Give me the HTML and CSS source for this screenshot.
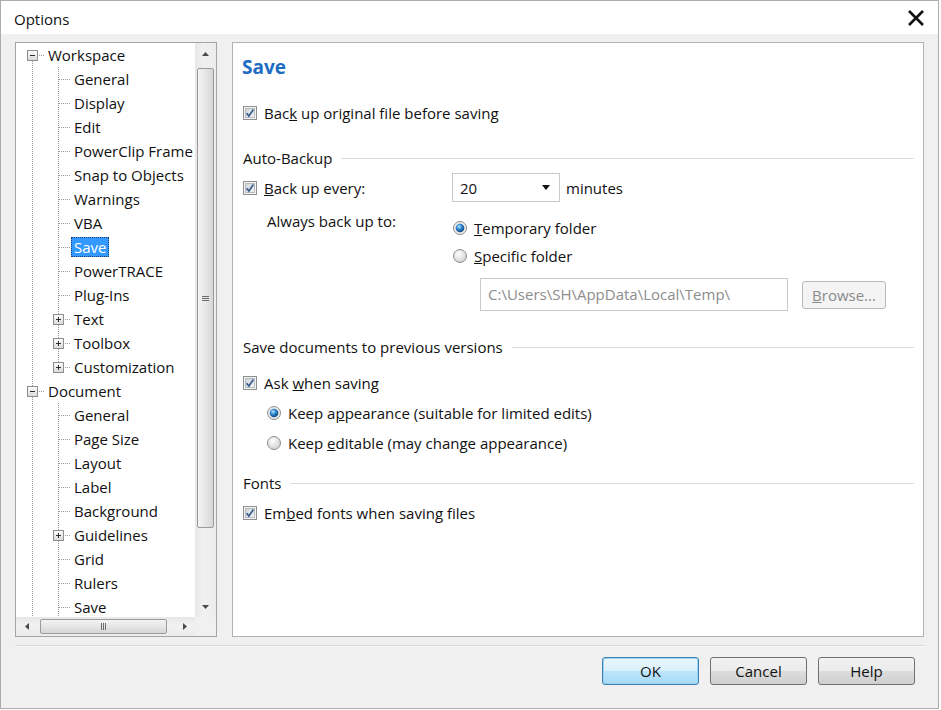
FILE: index.html
```html
<!DOCTYPE html>
<html lang="en">
<head>
    <meta charset="UTF-8">
    <title>Options</title>
    <link rel="stylesheet" href="styles.css">
</head>
<body>
    <svg class="defs" width="0" height="0">
        <defs>
            <linearGradient id="g-box" x1="0" y1="0" x2="0" y2="1">
                <stop offset="0" stop-color="#ffffff"/>
                <stop offset="1" stop-color="#d8d8d8"/>
            </linearGradient>
            <linearGradient id="g-cb" x1="0" y1="0" x2="1" y2="1">
                <stop offset="0" stop-color="#cfd3d8"/>
                <stop offset="1" stop-color="#f6f6f6"/>
            </linearGradient>
            <radialGradient id="g-radio" cx="0.4" cy="0.35" r="0.7">
                <stop offset="0" stop-color="#ffffff"/>
                <stop offset="1" stop-color="#cdcdcd"/>
            </radialGradient>
            <radialGradient id="g-dot" cx="0.4" cy="0.35" r="0.7">
                <stop offset="0" stop-color="#b9e4fb"/>
                <stop offset="0.45" stop-color="#2e88d0"/>
                <stop offset="1" stop-color="#0c3d73"/>
            </radialGradient>
            <symbol id="pipe" viewBox="0 0 26 24">
                <path d="M13.5 0V24" class="dots"/>
            </symbol>
            <symbol id="tee" viewBox="0 0 26 24">
                <path d="M13.5 0V24M14 12.5H25" class="dots"/>
            </symbol>
            <symbol id="minus-first" viewBox="0 0 26 24">
                <path d="M13.5 12V24M18 12.5H25" class="dots"/>
                <rect x="8.5" y="7.5" width="10" height="10" fill="url(#g-box)" stroke="#8e8e8e"/>
                <path d="M11 12.5H16" stroke="#2b2b2b"/>
            </symbol>
            <symbol id="minus-mid" viewBox="0 0 26 24">
                <path d="M13.5 0V24M18 12.5H25" class="dots"/>
                <rect x="8.5" y="7.5" width="10" height="10" fill="url(#g-box)" stroke="#8e8e8e"/>
                <path d="M11 12.5H16" stroke="#2b2b2b"/>
            </symbol>
            <symbol id="plus-mid" viewBox="0 0 26 24">
                <path d="M13.5 0V24M18 12.5H25" class="dots"/>
                <rect x="8.5" y="7.5" width="10" height="10" fill="url(#g-box)" stroke="#8e8e8e"/>
                <path d="M11 12.5H16M13.5 10V15" stroke="#2b2b2b"/>
            </symbol>
            <symbol id="plus-last" viewBox="0 0 26 24">
                <path d="M13.5 0V12M18 12.5H25" class="dots"/>
                <rect x="8.5" y="7.5" width="10" height="10" fill="url(#g-box)" stroke="#8e8e8e"/>
                <path d="M11 12.5H16M13.5 10V15" stroke="#2b2b2b"/>
            </symbol>
            <symbol id="cb-on" viewBox="0 0 14 14">
                <rect x="0.5" y="0.5" width="13" height="13" fill="#f4f4f4" stroke="#8e8f8f"/>
                <rect x="2.5" y="2.5" width="9" height="9" fill="url(#g-cb)" stroke="#b8bcc2"/>
                <path d="M3.6 7.2L5.9 10L10.4 3.6" fill="none" stroke="#3a5c8c" stroke-width="1.7"/>
            </symbol>
            <symbol id="radio-on" viewBox="0 0 14 14">
                <circle cx="7" cy="7" r="6.5" fill="#eaeaea" stroke="#8e8f8f"/>
                <circle cx="7" cy="7" r="4.3" fill="url(#g-dot)"/>
            </symbol>
            <symbol id="radio-off" viewBox="0 0 14 14">
                <circle cx="7" cy="7" r="6.5" fill="url(#g-radio)" stroke="#8e8f8f"/>
            </symbol>
        </defs>
    </svg>

    <div class="window">
        <div class="titlebar">
            <span class="title">Options</span>
            <svg class="close" viewBox="0 0 18 16">
                <path d="M2 1L16 15M16 1L2 15" stroke="#111" stroke-width="2.6"/>
            </svg>
        </div>

        <div class="content">
            <div class="main">
                <!-- tree -->
                <div class="tree">
                    <div class="tree-view">
                        <div class="row"><svg class="cell"><use href="#minus-first"/></svg><span class="label">Workspace</span></div>
                        <div class="row"><svg class="cell"><use href="#pipe"/></svg><svg class="cell"><use href="#tee"/></svg><span class="label">General</span></div>
                        <div class="row"><svg class="cell"><use href="#pipe"/></svg><svg class="cell"><use href="#tee"/></svg><span class="label">Display</span></div>
                        <div class="row"><svg class="cell"><use href="#pipe"/></svg><svg class="cell"><use href="#tee"/></svg><span class="label">Edit</span></div>
                        <div class="row"><svg class="cell"><use href="#pipe"/></svg><svg class="cell"><use href="#tee"/></svg><span class="label">PowerClip Frame</span></div>
                        <div class="row"><svg class="cell"><use href="#pipe"/></svg><svg class="cell"><use href="#tee"/></svg><span class="label">Snap to Objects</span></div>
                        <div class="row"><svg class="cell"><use href="#pipe"/></svg><svg class="cell"><use href="#tee"/></svg><span class="label">Warnings</span></div>
                        <div class="row"><svg class="cell"><use href="#pipe"/></svg><svg class="cell"><use href="#tee"/></svg><span class="label">VBA</span></div>
                        <div class="row"><svg class="cell"><use href="#pipe"/></svg><svg class="cell"><use href="#tee"/></svg><span class="label selected">Save</span></div>
                        <div class="row"><svg class="cell"><use href="#pipe"/></svg><svg class="cell"><use href="#tee"/></svg><span class="label">PowerTRACE</span></div>
                        <div class="row"><svg class="cell"><use href="#pipe"/></svg><svg class="cell"><use href="#tee"/></svg><span class="label">Plug-Ins</span></div>
                        <div class="row"><svg class="cell"><use href="#pipe"/></svg><svg class="cell"><use href="#plus-mid"/></svg><span class="label">Text</span></div>
                        <div class="row"><svg class="cell"><use href="#pipe"/></svg><svg class="cell"><use href="#plus-mid"/></svg><span class="label">Toolbox</span></div>
                        <div class="row"><svg class="cell"><use href="#pipe"/></svg><svg class="cell"><use href="#plus-last"/></svg><span class="label">Customization</span></div>
                        <div class="row"><svg class="cell"><use href="#minus-mid"/></svg><span class="label">Document</span></div>
                        <div class="row"><svg class="cell"><use href="#pipe"/></svg><svg class="cell"><use href="#tee"/></svg><span class="label">General</span></div>
                        <div class="row"><svg class="cell"><use href="#pipe"/></svg><svg class="cell"><use href="#tee"/></svg><span class="label">Page Size</span></div>
                        <div class="row"><svg class="cell"><use href="#pipe"/></svg><svg class="cell"><use href="#tee"/></svg><span class="label">Layout</span></div>
                        <div class="row"><svg class="cell"><use href="#pipe"/></svg><svg class="cell"><use href="#tee"/></svg><span class="label">Label</span></div>
                        <div class="row"><svg class="cell"><use href="#pipe"/></svg><svg class="cell"><use href="#tee"/></svg><span class="label">Background</span></div>
                        <div class="row"><svg class="cell"><use href="#pipe"/></svg><svg class="cell"><use href="#plus-mid"/></svg><span class="label">Guidelines</span></div>
                        <div class="row"><svg class="cell"><use href="#pipe"/></svg><svg class="cell"><use href="#tee"/></svg><span class="label">Grid</span></div>
                        <div class="row"><svg class="cell"><use href="#pipe"/></svg><svg class="cell"><use href="#tee"/></svg><span class="label">Rulers</span></div>
                        <div class="row"><svg class="cell"><use href="#pipe"/></svg><svg class="cell"><use href="#tee"/></svg><span class="label">Save</span></div>
                    </div>

                    <div class="vscroll">
                        <div class="arrow"><svg viewBox="0 0 7 4"><path d="M0 4L3.5 0L7 4Z"/></svg></div>
                        <div class="vtrack">
                            <div class="vthumb">
                                <svg viewBox="0 0 7 5"><path d="M0 0.5H7M0 2.5H7M0 4.5H7"/></svg>
                            </div>
                        </div>
                        <div class="arrow"><svg viewBox="0 0 7 4"><path d="M0 0L3.5 4L7 0Z"/></svg></div>
                    </div>

                    <div class="hscroll">
                        <div class="arrow"><svg viewBox="0 0 4 7"><path d="M4 0L0 3.5L4 7Z"/></svg></div>
                        <div class="htrack">
                            <div class="hthumb">
                                <svg viewBox="0 0 5 7"><path d="M0.5 0V7M2.5 0V7M4.5 0V7"/></svg>
                            </div>
                        </div>
                        <div class="arrow"><svg viewBox="0 0 4 7"><path d="M0 0L4 3.5L0 7Z"/></svg></div>
                    </div>
                    <div class="corner"></div>
                </div>

                <!-- settings page -->
                <div class="panel">
                    <h1 class="heading">Save</h1>

                    <div class="opt first-opt">
                        <svg class="box"><use href="#cb-on"/></svg>
                        <span>Bac<u>k</u> up original file before saving</span>
                    </div>

                    <div class="group-head auto-head">Auto-Backup</div>

                    <div class="auto-grid">
                        <div class="opt">
                            <svg class="box"><use href="#cb-on"/></svg>
                            <span><u>B</u>ack up every:</span>
                        </div>
                        <div class="every">
                            <div class="combo">
                                <span>20</span>
                                <svg viewBox="0 0 8 5"><path d="M0 0H8L4 5Z"/></svg>
                            </div>
                            <span class="unit">minutes</span>
                        </div>

                        <div class="always">Always back up to:</div>
                        <div class="dest">
                            <div class="opt radio-row">
                                <svg class="box"><use href="#radio-on"/></svg>
                                <span><u>T</u>emporary folder</span>
                            </div>
                            <div class="opt radio-row">
                                <svg class="box"><use href="#radio-off"/></svg>
                                <span><u>S</u>pecific folder</span>
                            </div>
                            <div class="path-row">
                                <div class="path">C:\Users\SH\AppData\Local\Temp\</div>
                                <div class="browse"><u>B</u>rowse...</div>
                            </div>
                        </div>
                    </div>

                    <div class="group-head versions-head">Save documents to previous versions</div>

                    <div class="opt ask">
                        <svg class="box"><use href="#cb-on"/></svg>
                        <span>Ask <u>w</u>hen saving</span>
                    </div>
                    <div class="opt sub">
                        <svg class="box"><use href="#radio-on"/></svg>
                        <span>Keep a<u>p</u>pearance (suitable for limited edits)</span>
                    </div>
                    <div class="opt sub">
                        <svg class="box"><use href="#radio-off"/></svg>
                        <span>Keep <u>e</u>ditable (may change appearance)</span>
                    </div>

                    <div class="group-head fonts-head">Fonts</div>

                    <div class="opt embed">
                        <svg class="box"><use href="#cb-on"/></svg>
                        <span>Em<u>b</u>ed fonts when saving files</span>
                    </div>
                </div>
            </div>

            <div class="separator"></div>

            <div class="buttons">
                <div class="btn default">OK</div>
                <div class="btn">Cancel</div>
                <div class="btn">Help</div>
            </div>
        </div>
    </div>
</body>
</html>
```

FILE: styles.css
```css
body {
    margin: 0;
    background: #fff;
    font-family: "Open Sans", "Noto Sans", sans-serif;
    font-size: 15px;
    color: #111;
}

.defs {
    display: block;
    overflow: hidden;
}

.window {
    width: 937px;
    height: 707px;
    border: 1px solid #acacac;
    background: #f0f0f0;
    display: flex;
    flex-direction: column;
}

.titlebar {
    height: 33px;
    background: #fff;
    display: flex;
    align-items: center;
    justify-content: space-between;
    padding: 0 13px 0 13px;
}

.title {
    font-size: 15px;
    color: #111;
    padding-top: 2px;
}

.close {
    width: 18px;
    height: 16px;
    margin-top: 1px;
}

.content {
    flex: 1;
    padding: 8px 14px 0 14px;
    display: flex;
    flex-direction: column;
}

.main {
    display: flex;
    gap: 15px;
    height: 595px;
}

/* tree */
.tree {
    width: 200px;
    border: 1px solid #a5a5a5;
    background: #fff;
    display: grid;
    grid-template-columns: 179px 21px;
    grid-template-rows: 1fr 19px;
    overflow: hidden;
}

.tree-view {
    overflow: hidden;
    padding: 0 0 0 3px;
}

.row {
    height: 24px;
    display: flex;
    align-items: center;
    white-space: nowrap;
}

.cell {
    width: 26px;
    height: 24px;
    flex: none;
}

.dots {
    fill: none;
    stroke: #9a9a9a;
    stroke-dasharray: 1 1;
}

.label {
    line-height: 18px;
    padding: 0 2px;
    border: 1px dotted transparent;
}

.label.selected {
    background: #3399ff;
    color: #fff;
    border-color: #1a3f6a;
}

.vscroll {
    background: linear-gradient(to right, #e7e7e7, #f1f1f1 40%, #ececec);
    display: flex;
    flex-direction: column;
}

.arrow {
    width: 21px;
    height: 21px;
    display: flex;
    align-items: center;
    justify-content: center;
    flex: none;
}

.hscroll .arrow {
    height: 19px;
}

.arrow svg {
    width: 7px;
    height: 4px;
    fill: #4a4a4a;
}

.hscroll .arrow svg {
    width: 4px;
    height: 7px;
}

.vtrack {
    flex: 1;
    padding-top: 4px;
}

.vthumb {
    height: 458px;
    margin: 0 2px;
    border: 1px solid #9a9a9a;
    border-radius: 2px;
    background: linear-gradient(to right, #f4f4f4, #e6e6e6 50%, #d6d6d6);
    display: flex;
    align-items: center;
    justify-content: center;
}

.vthumb svg {
    width: 7px;
    height: 5px;
    stroke: #6b6b6b;
    fill: none;
}

.hscroll {
    background: linear-gradient(to bottom, #e7e7e7, #f1f1f1 40%, #ececec);
    display: flex;
}

.htrack {
    flex: 1;
    padding-left: 3px;
}

.hthumb {
    width: 127px;
    height: 15px;
    box-sizing: border-box;
    margin-top: 2px;
    border: 1px solid #9a9a9a;
    border-radius: 2px;
    background: linear-gradient(to bottom, #f4f4f4, #e6e6e6 50%, #d6d6d6);
    display: flex;
    align-items: center;
    justify-content: center;
}

.hthumb svg {
    width: 5px;
    height: 7px;
    stroke: #6b6b6b;
    fill: none;
}

.corner {
    background: #f0f0f0;
}

/* right page */
.panel {
    flex: 1;
    border: 1px solid #b2b2b2;
    background: #fff;
    padding: 12px 9px 0 9px;
}

.heading {
    margin: 0;
    font-size: 19px;
    line-height: 24px;
    font-weight: bold;
    color: #1e6cc4;
}

.opt {
    display: flex;
    align-items: center;
    height: 24px;
    gap: 7px;
    padding-left: 1px;
    white-space: nowrap;
}

.box {
    width: 14px;
    height: 14px;
    flex: none;
}

.first-opt {
    margin-top: 22px;
}

.group-head {
    display: flex;
    align-items: center;
    height: 20px;
    padding-left: 1px;
}

.group-head::after {
    content: '';
    flex: 1;
    margin-left: 9px;
    border-top: 1px solid #d8dde2;
}

.auto-head {
    margin-top: 23px;
}

.auto-grid {
    display: grid;
    grid-template-columns: 210px 1fr;
    row-gap: 14px;
    margin-top: 5px;
    align-items: center;
}

.every {
    display: flex;
    align-items: center;
}

.combo {
    width: 108px;
    height: 29px;
    box-sizing: border-box;
    border: 1px solid #c6c9cd;
    display: flex;
    align-items: center;
    justify-content: space-between;
    padding: 0 9px 0 7px;
}

.combo svg {
    width: 8px;
    height: 5px;
    fill: #111;
}

.unit {
    margin-left: 6px;
}

.always {
    align-self: start;
    padding-left: 25px;
    margin-top: -7px;
    line-height: 24px;
}

.dest .radio-row + .radio-row {
    margin-top: 4px;
}

.path-row {
    display: flex;
    align-items: center;
    margin: 10px 0 0 28px;
}

.path {
    width: 308px;
    height: 33px;
    box-sizing: border-box;
    border: 1px solid #c9c9c9;
    color: #8d8d8d;
    line-height: 31px;
    padding-left: 7px;
}

.browse {
    margin-left: 14px;
    width: 84px;
    height: 28px;
    box-sizing: border-box;
    border: 1px solid #b9b9b9;
    border-radius: 3px;
    background: #f4f4f4;
    color: #8a8a8a;
    display: flex;
    align-items: center;
    justify-content: center;
}

.versions-head {
    margin-top: 26px;
}

.ask {
    margin-top: 14px;
}

.sub {
    padding-left: 25px;
    margin-top: 6px;
}

.fonts-head {
    margin-top: 18px;
}

.embed {
    margin-top: 8px;
}

/* bottom */
.separator {
    margin-top: 8px;
    border-top: 1px solid #d5d5d5;
    border-bottom: 1px solid #fbfbfb;
}

.buttons {
    display: flex;
    justify-content: flex-end;
    gap: 11px;
    margin-top: 10px;
    padding-right: 9px;
}

.btn {
    width: 97px;
    height: 28px;
    box-sizing: border-box;
    border: 1px solid #707070;
    border-radius: 3px;
    background: linear-gradient(to bottom, #f2f2f2, #ebebeb 49%, #dddddd 50%, #cfcfcf);
    display: flex;
    align-items: center;
    justify-content: center;
}

.btn.default {
    border-color: #3c7fb1;
    box-shadow: inset 0 0 0 1px #9bd5f5;
    background: linear-gradient(to bottom, #eaf6fd, #d9f0fc 49%, #bee6fd 50%, #a7d9f5);
}
```
